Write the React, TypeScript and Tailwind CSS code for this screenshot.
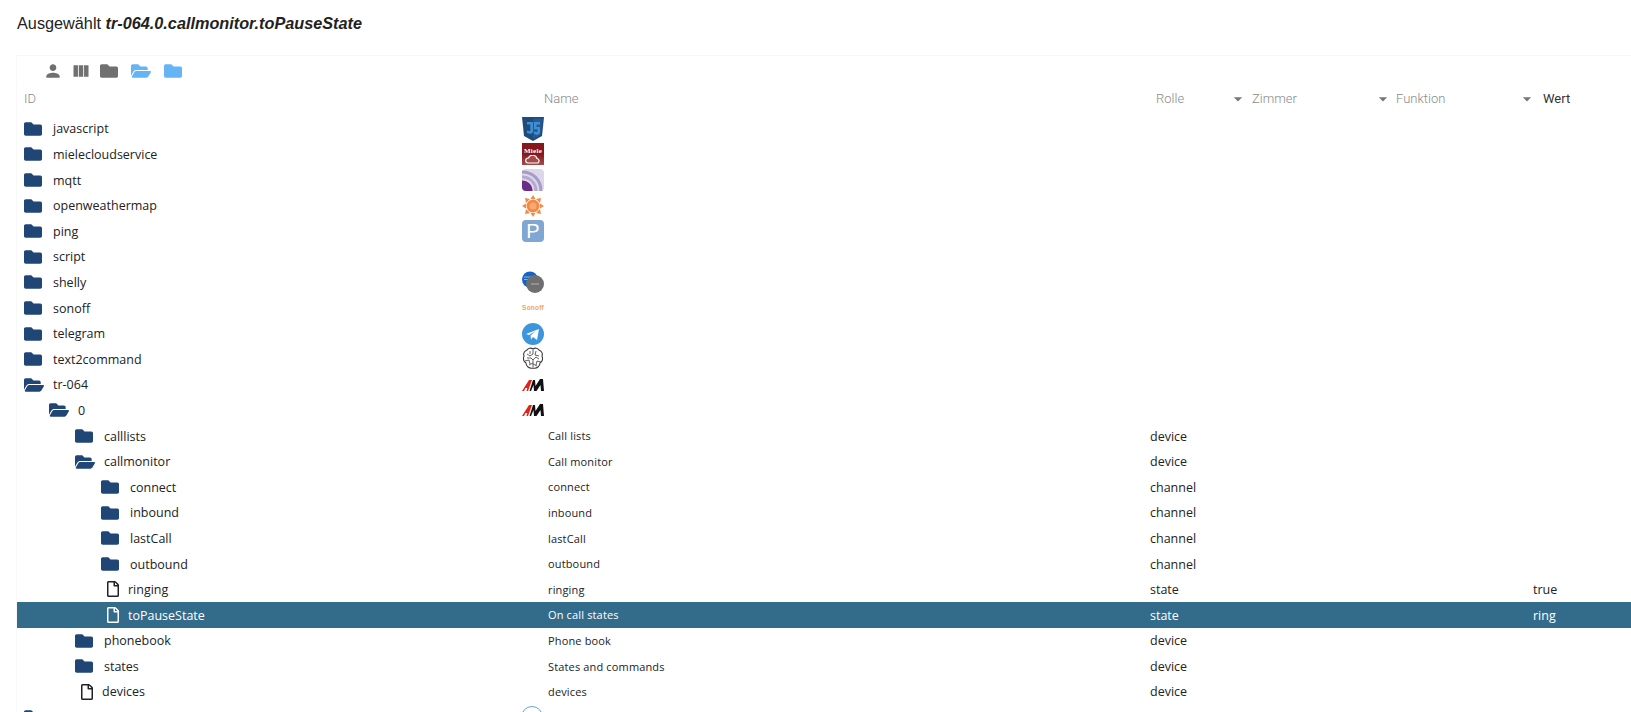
import { FaFolder, FaFolderOpen, FaRegFile } from "react-icons/fa"
import { MdPerson, MdViewColumn, MdArrowDropDown } from "react-icons/md"
import type { ReactNode } from "react"

const JsLogo = () => (
  <svg viewBox="0 0 22 24" className="h-6 w-[22px]">
    <path d="M0 0h22l-2 19-9 5-9-5z" fill="#1f4a7c" />
    <path d="M11 1.500h9.500l-1.800 16.500-7.700 4.300z" fill="#245a94" />
    <path d="M5 5h6v10l-2 2-4-1v-2.500l2.500.7.800-.7V7.500H5z" fill="#3f8fd0" />
    <path d="M12 5h6v2.500h-3.500v2.500H18v6l-2.500 2-3.500-1v-2.500l3 .8.500-.5v-2.500H12z" fill="#3f8fd0" />
  </svg>
)

const MieleLogo = () => (
  <div className="flex h-[22px] w-[22px] flex-col items-center bg-gradient-to-b from-[#85181c] via-[#85181c] to-[#a84a4c] pt-[5px] font-['Liberation_Serif',serif] text-[7px] font-bold leading-[7px] tracking-[0.3px] text-white">
    Miele
    <svg viewBox="0 0 22 10" className="h-[10px] w-[22px]">
      <path d="M6 8a2.500 2.500 0 0 1 .5-5A4.500 4.500 0 0 1 15 3.500a2.500 2.500 0 0 1 1 4.500z" fill="#a84a4c" stroke="#fff" strokeWidth="1.200" />
    </svg>
  </div>
)

const MqttLogo = () => (
  <svg viewBox="0 0 22 22" className="h-[22px] w-[22px]">
    <rect width="22" height="22" rx="4" fill="#dcd8ea" />
    <path d="M0 3c11 0 19 8 19 19" fill="none" stroke="#a99bc6" strokeWidth="3" />
    <path d="M0 8c8 0 14 6 14 14" fill="none" stroke="#b5a9cf" strokeWidth="3" />
    <path d="M0 11.500c6 0 10.500 4.500 10.500 10.500H4a4 4 0 0 1-4-4z" fill="#6b2c86" />
  </svg>
)

const SunLogo = () => (
  <svg viewBox="0 0 22 22" className="h-[22px] w-[22px]">
    <g fill="#f28a45">
      <path d="M11 0l2.500 4h-5zM11 22l-2.500-4h5zM0 11l4-2.500v5zM22 11l-4 2.500v-5z" />
      <path d="M3 3l5 1-4 4zM19 3l-1 5-4-4zM3 19l1-5 4 4zM19 19l-5-1 4-4z" />
    </g>
    <circle cx="11" cy="11" r="6.500" fill="#f28a45" />
    <circle cx="11" cy="11" r="3.500" fill="#f6a877" />
  </svg>
)

const PingLogo = () => (
  <div className="flex h-[22px] w-[22px] items-center justify-center rounded-[4px] bg-[#80a6d2] font-['Liberation_Sans',sans-serif] text-[20px] font-normal text-white">
    P
  </div>
)

const ShellyLogo = () => (
  <svg viewBox="0 0 24 23" className="h-[23px] w-6">
    <circle cx="9" cy="8.500" r="8" fill="#1763c4" />
    <path d="M3 6h8M3 8.500h5" stroke="#8fb6ea" strokeWidth="1" />
    <circle cx="14" cy="13" r="9" fill="#6f6f6f" />
    <path d="M10 13h8" stroke="#9d9d9d" strokeWidth="1.500" />
  </svg>
)

const SonoffLogo = () => (
  <div className="flex h-[22px] w-[24px] items-center justify-center font-['Liberation_Sans',sans-serif] text-[6.500px] font-bold tracking-[0.2px] text-[#f2a654]">
    Sonoff
  </div>
)

const TelegramLogo = () => (
  <svg viewBox="0 0 22 22" className="h-[22px] w-[22px]">
    <circle cx="11" cy="11" r="11" fill="#3d95dd" />
    <path d="M4 11l13-5-2 11-4-3-2 2.500-.5-4 5.500-4.500-7 4z" fill="#fff" />
  </svg>
)

const BrainLogo = () => (
  <svg viewBox="0 0 22 24" className="h-6 w-[22px]" fill="none" stroke="#3a3a3a" strokeWidth="1.100">
    <path d="M11 2c-2-1.500-5-1-6 1-3 1-4 4-3 6-1.500 3 0 6 2 7 0 3 3 6 7 5 4 1 7-2 7-5 2-1 3.500-4 2-7 1-2 0-5-3-6-1-2-4-2.500-6-1z" />
    <path d="M11 3v4l-3 2-3-2M8 4v3M14 4l-1 4 4 1M5 11h4l2 2 3-3 3 2M3 14l4-1 1 4M19 15l-4-1-1 4M11 13v7M7 18l4-2M15 19l-4-2" strokeWidth="0.800" />
  </svg>
)

const AvmLogo = () => (
  <svg viewBox="0 0 22 14" className="h-[14px] w-[22px]">
    <path d="M0 13L7 2h3L6 13H4.500l.8-3H3.500l-1.500 3z" fill="#e2231a" />
    <path d="M7.500 13L11 2h2l.5 6L18 1h3l1 12h-3l-.5-6-4 6h-2.500l-.5-6-2.500 6z" fill="#111" />
  </svg>
)

type RowData = {
  id: string
  icon: "folder" | "open" | "file"
  level: 0 | 1 | 2 | 3
  logo?: ReactNode
  name?: string
  role?: string
  value?: string
  selected?: boolean
}

const rows: RowData[] = [
  { id: "javascript", icon: "folder", level: 0, logo: <JsLogo /> },
  { id: "mielecloudservice", icon: "folder", level: 0, logo: <MieleLogo /> },
  { id: "mqtt", icon: "folder", level: 0, logo: <MqttLogo /> },
  { id: "openweathermap", icon: "folder", level: 0, logo: <SunLogo /> },
  { id: "ping", icon: "folder", level: 0, logo: <PingLogo /> },
  { id: "script", icon: "folder", level: 0 },
  { id: "shelly", icon: "folder", level: 0, logo: <ShellyLogo /> },
  { id: "sonoff", icon: "folder", level: 0, logo: <SonoffLogo /> },
  { id: "telegram", icon: "folder", level: 0, logo: <TelegramLogo /> },
  { id: "text2command", icon: "folder", level: 0, logo: <BrainLogo /> },
  { id: "tr-064", icon: "open", level: 0, logo: <AvmLogo /> },
  { id: "0", icon: "open", level: 1, logo: <AvmLogo /> },
  { id: "calllists", icon: "folder", level: 2, name: "Call lists", role: "device" },
  { id: "callmonitor", icon: "open", level: 2, name: "Call monitor", role: "device" },
  { id: "connect", icon: "folder", level: 3, name: "connect", role: "channel" },
  { id: "inbound", icon: "folder", level: 3, name: "inbound", role: "channel" },
  { id: "lastCall", icon: "folder", level: 3, name: "lastCall", role: "channel" },
  { id: "outbound", icon: "folder", level: 3, name: "outbound", role: "channel" },
  { id: "ringing", icon: "file", level: 3, name: "ringing", role: "state", value: "true" },
  { id: "toPauseState", icon: "file", level: 3, name: "On call states", role: "state", value: "ring", selected: true },
  { id: "phonebook", icon: "folder", level: 2, name: "Phone book", role: "device" },
  { id: "states", icon: "folder", level: 2, name: "States and commands", role: "device" },
  { id: "devices", icon: "file", level: 2, name: "devices", role: "device" },
]

const indent = {
  0: "pl-[7px]",
  1: "pl-[32px]",
  2: "pl-[58px]",
  3: "pl-[84px]",
}

const Row = ({ row }: { row: RowData }) => {
  const iconColor = row.selected ? "text-white" : "text-[#1f4674]"
  return (
    <div className={`flex h-[25.6px] items-center text-[12.5px] ${row.selected ? "bg-[#336b8b] text-white" : "text-[#222222]"}`}>
      <div className={`flex w-[505px] shrink-0 items-center ${indent[row.level]}`}>
        {row.icon === "folder" && <FaFolder className={`w-[18px] shrink-0 text-[18px] ${iconColor}`} />}
        {row.icon === "open" && <FaFolderOpen className={`w-[20px] shrink-0 text-[18px] ${iconColor}`} />}
        {row.icon === "file" && (
          <span className="ml-[4px] mr-[-4px] w-[18px] shrink-0">
            <FaRegFile className={`text-[16px] ${row.selected ? "text-white" : "text-[#222222]"}`} />
          </span>
        )}
        <span className={`pt-[2px] ${row.icon === "folder" ? "ml-[11px]" : "ml-[9px]"}`}>{row.id}</span>
      </div>
      <div className="flex w-[628px] shrink-0 items-center">
        {row.logo ? (
          <div className="ml-[-1px] flex w-[24px] justify-center">{row.logo}</div>
        ) : (
          <span className="pl-[26px] pt-[1px] text-[11px] tracking-[0.15px]">{row.name}</span>
        )}
      </div>
      <div className="w-[383px] shrink-0 pt-[2px]">{row.role}</div>
      <div className="pt-[2px]">{row.value}</div>
    </div>
  )
}

const HeaderCell = ({ label, className }: { label: string; className: string }) => (
  <span className={`font-['Roboto',sans-serif] text-[13px] font-light ${className}`}>{label}</span>
)

export default function App() {
  return (
    <div className="h-[712px] overflow-hidden bg-white font-['Open_Sans','Noto_Sans',sans-serif]">
      <div className="flex h-[46px] items-center pl-[17px] pt-[1px] font-['Liberation_Sans',sans-serif] text-[16.25px] text-[#222222]">
        Ausgewählt&nbsp;<b className="italic">tr-064.0.callmonitor.toPauseState</b>
      </div>
      <div className="ml-[16px] mt-[9px] border-l border-t border-[#f8f8f8]">
        <div className="flex h-[32px] items-center pb-[2px] pl-[26px] text-[#707070]">
          <MdPerson className="text-[20px]" />
          <MdViewColumn className="ml-[8px] text-[20px]" />
          <FaFolder className="ml-[9px] text-[18px]" />
          <FaFolderOpen className="ml-[13px] w-[20px] text-[18px] text-[#64b5f6]" />
          <FaFolder className="ml-[13px] text-[18px] text-[#64b5f6]" />
        </div>
        <div className="flex h-[28px] items-center pb-[6px] pl-[7px] text-[#8a8a8a]">
          <HeaderCell label="ID" className="w-[520px]" />
          <HeaderCell label="Name" className="w-[612px]" />
          <HeaderCell label="Rolle" className="w-[72px]" />
          <MdArrowDropDown className="text-[20px] text-[#777777]" />
          <HeaderCell label="Zimmer" className="ml-[4px] w-[121px]" />
          <MdArrowDropDown className="text-[20px] text-[#777777]" />
          <HeaderCell label="Funktion" className="ml-[3px] w-[121px]" />
          <MdArrowDropDown className="text-[20px] text-[#777777]" />
          <HeaderCell label="Wert" className="ml-[6px] font-normal text-[#333333]" />
        </div>
        {rows.map((row) => (
          <Row key={row.id} row={row} />
        ))}
        <div className="flex h-[25.6px] items-center pl-[7px]">
          <FaFolder className="w-[18px] shrink-0 text-[18px] text-[#1f4674]" />
          <div className="ml-[479px] h-[22px] w-[22px] rounded-full border border-[#64a6e0]" />
        </div>
      </div>
    </div>
  )
}
